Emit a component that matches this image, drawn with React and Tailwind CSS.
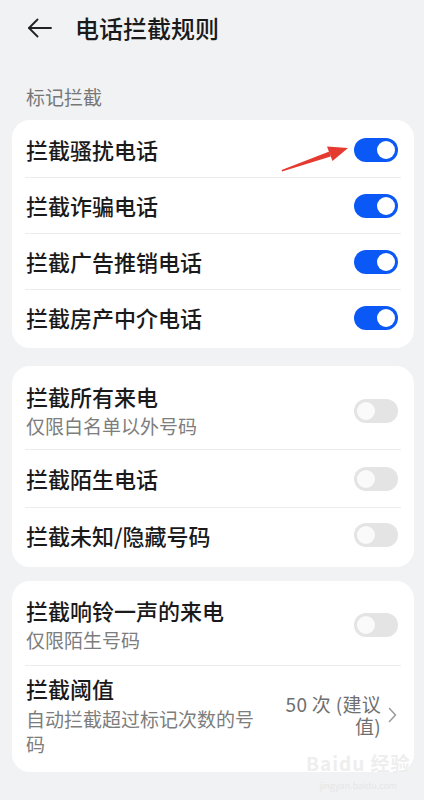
import React from 'react';

const Toggle = ({ on }) => (
  <div
    className={`w-[44px] h-[24px] rounded-full p-[3px] flex shrink-0 mr-[3px] ${
      on ? 'bg-[#0a59f7] justify-end' : 'bg-[#e4e4e4] justify-start'
    }`}
  >
    <div className={`w-[18px] h-[18px] rounded-full ${on ? 'bg-white' : 'bg-[#fafafa]'}`} />
  </div>
);

const Divider = () => <div className="h-px bg-[#ececec]" />;

const SwitchRow = ({ title, on, h = 'h-[55px]' }) => (
  <div className={`flex items-center justify-between ${h}`}>
    <div className="pl-[1px] text-[22px] font-medium text-[#1a1a1a]">{title}</div>
    <Toggle on={on} />
  </div>
);

const TwoLineRow = ({ title, sub, on, pad }) => (
  <div className={`flex items-center justify-between ${pad}`}>
    <div className="pl-[1px]">
      <div className="text-[22px] leading-[30px] font-medium text-[#1a1a1a]">{title}</div>
      <div className="text-[19px] leading-[30px] text-[#7d7d7d]">{sub}</div>
    </div>
    <Toggle on={on} />
  </div>
);

const Card = ({ children, className = '' }) => (
  <div className={`ml-[12px] mr-[10px] bg-white rounded-[18px] px-[13px] ${className}`}>{children}</div>
);

export default function App() {
  return (
    <div className="relative min-h-[800px] w-[424px] bg-[#f1f2f4] font-['Noto_Sans_CJK_SC','Noto_Sans',sans-serif] overflow-hidden">
      {/* Header */}
      <header className="h-[56px] flex items-center pl-[28px]">
        <svg width="24" height="20" viewBox="0 0 24 20" fill="none" stroke="#222" strokeWidth="1.8" strokeLinecap="round" strokeLinejoin="round">
          <path d="M1 10H23" />
          <path d="M9.5 1.5L1 10L9.5 18.5" />
        </svg>
        <h1 className="ml-[23px] text-[24px] font-medium text-[#1a1a1a]">电话拦截规则</h1>
      </header>

      <div className="mt-[28px] mb-[10px] pl-[26px] text-[19px] leading-[26px] text-[#777]">标记拦截</div>

      {/* Card 1 */}
      <Card className="pt-[2px] pb-[3px]">
        <SwitchRow title="拦截骚扰电话" on />
        <Divider />
        <SwitchRow title="拦截诈骗电话" on />
        <Divider />
        <SwitchRow title="拦截广告推销电话" on />
        <Divider />
        <SwitchRow title="拦截房产中介电话" on />
      </Card>

      {/* Card 2 */}
      <Card className="mt-[18px] pt-[4px] pb-[5px]">
        <TwoLineRow title="拦截所有来电" sub="仅限白名单以外号码" pad="pt-[11px] pb-[8px]" />
        <Divider />
        <SwitchRow title="拦截陌生电话" h="h-[57px]" />
        <Divider />
        <SwitchRow title="拦截未知/隐藏号码" h="h-[54px]" />
      </Card>

      {/* Card 3 */}
      <Card className="mt-[14px] pt-[4px] pb-[4px]">
        <TwoLineRow title="拦截响铃一声的来电" sub="仅限陌生号码" pad="pt-[10px] pb-[10px]" />
        <Divider />
        <div className="flex items-center justify-between pt-[7px] pb-[12px]">
          <div className="pl-[1px] w-[238px]">
            <div className="text-[22px] leading-[30px] font-medium text-[#1a1a1a]">拦截阈值</div>
            <div className="mt-[3px] text-[19px] leading-[25px] text-[#7d7d7d]">自动拦截超过标记次数的号码</div>
          </div>
          <div className="flex items-center">
            <div className="w-[104px] text-right text-[19px] leading-[22px] text-[#6f6f6f] tracking-[0.3px]">50 次 (建议值)</div>
            <svg className="ml-[7px] mr-[4px]" width="9" height="16" viewBox="0 0 9 16" fill="none" stroke="#9a9a9a" strokeWidth="1.5" strokeLinecap="round" strokeLinejoin="round">
              <path d="M1.5 1.5L7.5 8L1.5 14.5" />
            </svg>
          </div>
        </div>
      </Card>

      {/* Red annotation arrow */}
      <svg className="absolute left-0 top-0 pointer-events-none" width="424" height="800" viewBox="0 0 424 800">
        <polygon points="282,171.5 330.7,156.4 329.3,151.6 281.6,170" fill="#e53a30" />
        <polygon points="348,148 332.5,161 327,146.5" fill="#e53a30" />
      </svg>

      {/* Watermark */}
      <div className="absolute left-[306px] top-[752px] text-[#eeeeee] pointer-events-none text-center">
        <div className="text-[19px] leading-[22px] font-bold tracking-[1px]">Baidu 经验</div>
        <div className="mt-[6px] text-[9px] leading-[11px] text-[#e6e6e6]">jingyan.baidu.com</div>
      </div>
    </div>
  );
}
